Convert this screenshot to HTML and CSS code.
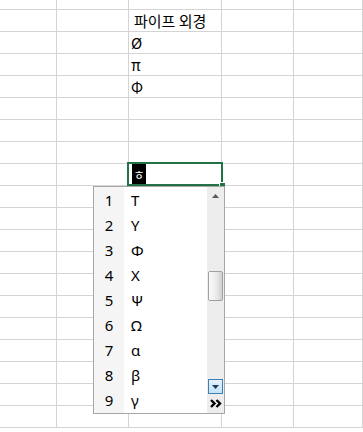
FILE: index.html
```html
<!DOCTYPE html>
<html>
    <head>
        <meta charset="utf-8">
        <link rel="stylesheet" href="styles.css">
    </head>
    <body>
        <div class="screen">
            <div class="sheet">
                <div class="cell top"></div><div class="cell top"></div><div class="cell top"></div><div class="cell top"></div><div class="cell top"></div>
                <div class="cell"></div><div class="cell"></div><div class="cell head">파이프 외경</div><div class="cell"></div><div class="cell"></div>
                <div class="cell"></div><div class="cell"></div><div class="cell">Ø</div><div class="cell"></div><div class="cell"></div>
                <div class="cell"></div><div class="cell"></div><div class="cell">π</div><div class="cell"></div><div class="cell"></div>
                <div class="cell"></div><div class="cell"></div><div class="cell">Φ</div><div class="cell"></div><div class="cell"></div>
                <div class="cell"></div><div class="cell"></div><div class="cell"></div><div class="cell"></div><div class="cell"></div>
                <div class="cell"></div><div class="cell"></div><div class="cell"></div><div class="cell"></div><div class="cell"></div>
                <div class="cell"></div><div class="cell"></div><div class="cell"></div><div class="cell"></div><div class="cell"></div>
                <div class="cell"></div><div class="cell"></div><div class="cell editing"><span class="ime">ㅎ</span></div><div class="cell"></div><div class="cell"></div>
                <div class="cell"></div><div class="cell"></div><div class="cell"></div><div class="cell"></div><div class="cell"></div>
                <div class="cell"></div><div class="cell"></div><div class="cell"></div><div class="cell"></div><div class="cell"></div>
                <div class="cell"></div><div class="cell"></div><div class="cell"></div><div class="cell"></div><div class="cell"></div>
                <div class="cell"></div><div class="cell"></div><div class="cell"></div><div class="cell"></div><div class="cell"></div>
                <div class="cell"></div><div class="cell"></div><div class="cell"></div><div class="cell"></div><div class="cell"></div>
                <div class="cell"></div><div class="cell"></div><div class="cell"></div><div class="cell"></div><div class="cell"></div>
                <div class="cell"></div><div class="cell"></div><div class="cell"></div><div class="cell"></div><div class="cell"></div>
                <div class="cell"></div><div class="cell"></div><div class="cell"></div><div class="cell"></div><div class="cell"></div>
                <div class="cell"></div><div class="cell"></div><div class="cell"></div><div class="cell"></div><div class="cell"></div>
                <div class="cell"></div><div class="cell"></div><div class="cell"></div><div class="cell"></div><div class="cell"></div>
                <div class="cell"></div><div class="cell"></div><div class="cell"></div><div class="cell"></div><div class="cell"></div>
            </div>

            <div class="selection"><span class="handle"></span></div>

            <div class="dropdown">
                <div class="list">
                    <div class="item"><span class="num">1</span><span class="sym">Τ</span></div>
                    <div class="item"><span class="num">2</span><span class="sym">Υ</span></div>
                    <div class="item"><span class="num">3</span><span class="sym">Φ</span></div>
                    <div class="item"><span class="num">4</span><span class="sym">Χ</span></div>
                    <div class="item"><span class="num">5</span><span class="sym">Ψ</span></div>
                    <div class="item"><span class="num">6</span><span class="sym">Ω</span></div>
                    <div class="item"><span class="num">7</span><span class="sym">α</span></div>
                    <div class="item"><span class="num">8</span><span class="sym">β</span></div>
                    <div class="item"><span class="num">9</span><span class="sym">γ</span></div>
                </div>
                <div class="scrollbar">
                    <div class="btn-up">
                        <svg width="7" height="4" viewBox="0 0 7 4"><path d="M0 4 L3.5 0 L7 4 Z" fill="#5a5a5a"/></svg>
                    </div>
                    <div class="thumb"></div>
                    <div class="btn-down">
                        <svg width="7" height="4" viewBox="0 0 7 4"><path d="M0 0 L3.5 4 L7 0 Z" fill="#1d3f62"/></svg>
                    </div>
                    <div class="btn-more">
                        <svg width="12" height="9" viewBox="0 0 12 9"><path d="M1 1 L4.5 4.5 L1 8 M6.5 1 L10 4.5 L6.5 8" fill="none" stroke="#000" stroke-width="2.4"/></svg>
                    </div>
                </div>
            </div>
        </div>
    </body>
</html>
```

FILE: styles.css
```css
body {
    margin: 0;
    overflow: hidden;
    background-color: #fff;
    font-family: "Noto Sans CJK KR", "Noto Sans", sans-serif;
}

.screen {
    position: relative;
    width: 363px;
    height: 432px;
    overflow: hidden;
}

.sheet {
    display: grid;
    grid-template-columns: 57px 72px 93px 72px 1fr;
    grid-template-rows: 10px;
    grid-auto-rows: 22px;
}

.cell {
    box-sizing: border-box;
    border-right: 1px solid #d4d4d4;
    border-bottom: 1px solid #d4d4d4;
    padding-left: 2px;
    font-size: 15px;
    line-height: 21px;
    color: #000;
    white-space: nowrap;
    overflow: hidden;
}

.head {
    padding-left: 5px;
}

.editing {
    display: flex;
    padding-left: 3px;
}

.ime {
    width: 14px;
    background-color: #000;
    color: #fff;
    font-size: 12px;
    display: flex;
    align-items: center;
    justify-content: center;
}

.selection {
    position: absolute;
    left: 127px;
    top: 162px;
    width: 96px;
    height: 24px;
    box-sizing: border-box;
    border: 2px solid #217346;
}

.handle {
    position: absolute;
    right: -4px;
    bottom: -4px;
    width: 5px;
    height: 5px;
    background-color: #217346;
    border-left: 1px solid #fff;
    border-top: 1px solid #fff;
}

.dropdown {
    position: absolute;
    left: 93px;
    top: 186px;
    width: 132px;
    height: 228px;
    box-sizing: border-box;
    border: 1px solid #a6a6a6;
    background-color: #fff;
    display: flex;
    font-family: "Noto Sans", sans-serif;
    font-size: 15px;
    color: #000;
}

.list {
    flex: 1;
    background: linear-gradient(to right, #f5f5f5 30px, #fff 30px);
}

.item {
    display: flex;
    align-items: center;
    height: 25px;
}

.num {
    width: 30px;
    text-align: center;
}

.sym {
    padding-left: 7px;
}

.scrollbar {
    width: 17px;
    background-color: #ededed;
    display: flex;
    flex-direction: column;
    align-items: center;
}

.btn-up {
    height: 17px;
    width: 17px;
    display: flex;
    align-items: center;
    justify-content: center;
}

.thumb {
    margin-top: 67px;
    width: 15px;
    height: 30px;
    box-sizing: border-box;
    border: 1px solid #a0a0a0;
    border-radius: 2px;
    background: linear-gradient(to right, #fafafa, #e9e9e9 60%, #d0d0d0);
}

.btn-down {
    margin-top: 78px;
    width: 15px;
    height: 15px;
    box-sizing: border-box;
    border: 1px solid #3c7fb1;
    background: linear-gradient(#e6f3fc, #c3e1f8);
    display: flex;
    align-items: center;
    justify-content: center;
}

.btn-more {
    flex: 1;
    width: 17px;
    display: flex;
    align-items: center;
    justify-content: center;
}
```
